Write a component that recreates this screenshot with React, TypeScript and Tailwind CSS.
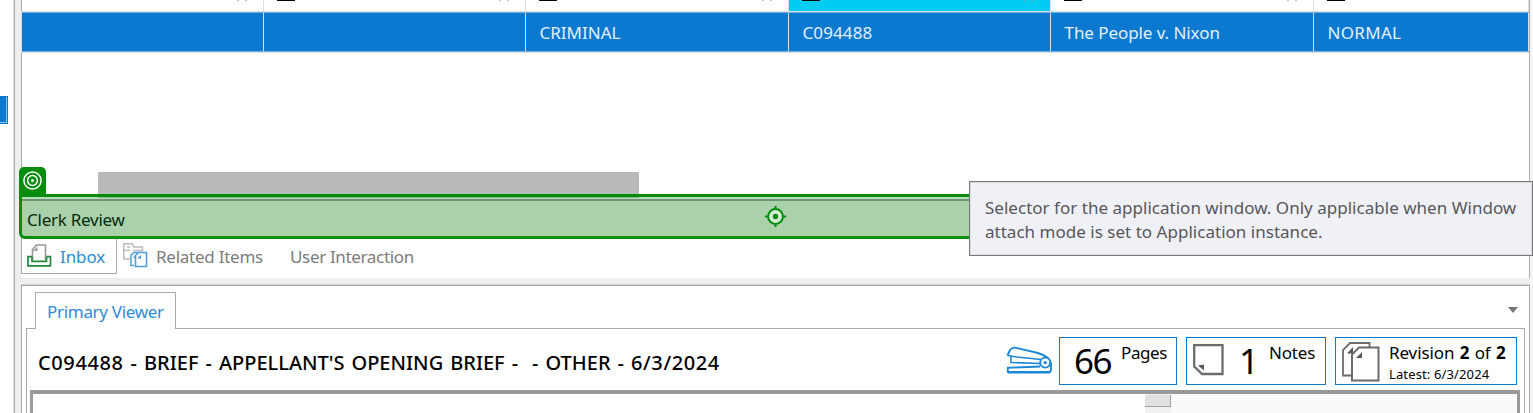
import React from "react";

const headers = [
  { w: "w-[242px]", mark: false, active: false, text: "", track: "" },
  { w: "w-[262px]", mark: true, active: false, text: "", track: "" },
  { w: "w-[263px]", mark: true, active: false, text: "CRIMINAL", track: "" },
  { w: "w-[262px]", mark: true, active: true, text: "C094488", track: "tracking-[0.1px]" },
  { w: "w-[263px]", mark: true, active: false, text: "The People v. Nixon", track: "tracking-[-0.07px]" },
  { w: "w-[215px]", mark: true, active: false, text: "NORMAL", track: "tracking-[0.3px]" },
];

function InboxIcon() {
  return (
    <svg width="25" height="25" viewBox="0 0 25 25" fill="none" className="shrink-0">
      <path d="M5.5 17V6.5L9.5 2H18.5V17" fill="#fff" stroke="#999999" strokeWidth="1.6" />
      <path d="M6 8L10.5 3.5V8Z" fill="#a0a0a0" />
      <path d="M5 13.7H1V22.8H23.5V13.7H19.5M5 13.7V18.3H19.5V13.7" stroke="#1f8a3a" strokeWidth="1.7" />
    </svg>
  );
}

function RelatedIcon() {
  return (
    <svg width="25" height="25" viewBox="0 0 25 25" fill="none" className="shrink-0">
      <path d="M7 16H.8V.8H9L11 4H19.5V8.5M.8 7.5H7M10 7.5H19.5M4 4H7" stroke="#bcbcbc" strokeWidth="1.5" />
      <path d="M11 22.5H8V12L11 9.5H15" stroke="#4b9fdc" strokeWidth="1.5" />
      <path d="M12.5 23.5V12.5L15.5 9.5H23.5V23.5Z" fill="#fff" stroke="#4b9fdc" strokeWidth="1.6" />
      <path d="M14.5 15.5L18 12V15.5Z" fill="#3491d8" />
      <path d="M10 15L12 12.5V15Z" fill="#3491d8" />
    </svg>
  );
}

function StaplerIcon() {
  return (
    <svg width="48" height="30" viewBox="0 0 48 30" fill="none" stroke="#1c87d4" strokeWidth="1.9" strokeLinejoin="round" className="shrink-0">
      <path d="M1.5 9.5L4 4Q6 1 10 1.8L30 6.5Q44 10 45 18V23.5Q45 26 43 26H1.8V21.8L34 20.5" />
      <path d="M1.5 9.5L11 11L35 13.5M5 10.5V16.5L34 17.5" strokeWidth="1.6" />
      <path d="M2 26.2H44" strokeWidth="2.6" />
      <circle cx="39.2" cy="16.6" r="5" fill="#fff" />
      <circle cx="39.2" cy="16.6" r="1.7" fill="#1c87d4" stroke="none" />
    </svg>
  );
}

function NoteIcon() {
  return (
    <svg width="31" height="32" viewBox="0 0 31 32" fill="none" className="shrink-0">
      <path d="M1.2 1.2H29.5V30H9L1.2 22.5Z" stroke="#6b6c6e" strokeWidth="2.3" />
      <path d="M5 21.5L11 20.5V26.5Z" fill="#58595b" />
    </svg>
  );
}

function RevisionIcon() {
  return (
    <svg width="38" height="40" viewBox="0 0 38 40" fill="none" stroke="#6b6c6e" strokeWidth="1.8" className="shrink-0">
      <path d="M9 33.5H1V8L8 1H27.5V5" />
      <path d="M5 11.5L11 5V11.5Z" fill="#58595b" stroke="none" />
      <path d="M10 38.5V12.5L17 5.5H36.5V38.5Z" fill="#fff" strokeWidth="2" />
      <path d="M14 16L20 10V16Z" fill="#58595b" stroke="none" />
    </svg>
  );
}

export default function App() {
  return (
    <div className="relative flex h-[413px] w-[1533px] overflow-hidden bg-white font-['Noto_Sans',sans-serif] text-[17px] leading-6">
      <aside className="w-[13px] shrink-0 pt-24">
        <div className="h-7 w-2 bg-[#0c79d1] pt-px pr-px pb-px">
          <div className="h-full border-r border-b border-[#8dbfe9]" />
        </div>
      </aside>
      <div className="w-2 shrink-0 border-l border-[#e3e3e3]">
        <div className="h-full border-l border-[#a9a9a9] bg-[#eeeeee]" />
      </div>

      <main className="flex w-[1509px] shrink-0 flex-col">
        <section className="flex h-[278px] shrink-0 flex-col border-r border-[#b0b0b0] bg-white">
          <div className="flex h-[11px] shrink-0 border-l border-[#a9a9a9]">
            {headers.map((h, i) => (
              <div
                key={i}
                className={`${h.w} flex shrink-0 items-start justify-between border-r border-[#dedede] pr-4 pl-[13px] ${h.active ? "bg-[#00cdf1]" : ""}`}
              >
                <span className={`h-px w-[18px] ${h.mark ? "bg-black" : ""}`} />
                {i < 5 && (
                  <span className="flex gap-[6px]">
                    <i className="h-px w-[2px] bg-[#999999]/60" />
                    <i className="h-px w-[2px] bg-[#999999]/60" />
                  </span>
                )}
              </div>
            ))}
          </div>
          <div className="h-[42px] shrink-0 border-y border-l border-[#dddddd]">
            <div className="flex h-10 border-y border-[#78b2e3] bg-[#0c79d1] text-[#e4f0fb]">
              {headers.map((h, i) => (
                <div key={i} className={`${h.w} flex shrink-0 items-center border-r border-[#d5e2ee] pt-px pl-[13.5px] whitespace-nowrap ${h.track}`}>
                  {h.text}
                </div>
              ))}
            </div>
          </div>
          <div className="h-[185px] shrink-0 border-l border-[#a9a9a9] pt-[119px] pl-[76px]">
            <div className="h-[27px] w-[541px] bg-[#b9babc]" />
          </div>
          <nav className="flex h-9 shrink-0 text-[#7c7c7c]">
            <div className="flex w-24 items-start border-r border-b border-l border-[#a9a9a9] bg-white pt-[5px] pl-[5px]">
              <InboxIcon />
              <span className="pt-[2px] pl-2 tracking-[-0.1px] text-[#2f8bd4]">Inbox</span>
            </div>
            <div className="flex w-[146px] items-start pt-[5px] pl-[6px]">
              <RelatedIcon />
              <span className="pt-[2px] pl-2 tracking-[-0.25px] whitespace-nowrap">Related Items</span>
            </div>
            <span className="pt-[7px] pl-[27px] tracking-[-0.34px] whitespace-nowrap">User Interaction</span>
          </nav>
        </section>

        <div className="h-[7px] shrink-0 border-b border-[#cecece] bg-[#eeeeee]" />

        <section className="flex flex-1 flex-col border border-b-0 border-[#a9a9a9]">
          <div className="flex h-[43px] shrink-0 items-end justify-between px-1">
            <div className="h-full w-[9px] border-b border-[#a9a9a9]" />
            <div className="flex h-full w-[141px] flex-col justify-end">
              <div className="h-[37px] border border-b-0 border-[#a9a9a9] pt-[7px] pl-[11px] tracking-[-0.3px] whitespace-nowrap text-[#2f8bd4]">Primary Viewer</div>
            </div>
            <div className="flex h-full flex-1 justify-end border-b border-[#a9a9a9] pt-[21px] pr-[7px]">
              <svg width="10" height="6" viewBox="0 0 10 6"><path d="M0 0H10L5 6Z" fill="#747474" /></svg>
            </div>
          </div>
          <div className="mx-1 flex-1 border-x border-[#a9a9a9] pr-1 pl-[3px]">
            <div className="flex h-[61px] items-start pt-2 pl-2 text-black">
              <h1 className="flex-1 pt-[14px] text-[20px] font-[550] [word-spacing:1.8px] whitespace-pre">
                <span className="tracking-[0.6px]">C094488</span>
                {" - BRIEF - APPELLANT'S OPENING BRIEF -  - OTHER - "}
                <span className="tracking-[0.6px]">6/3/2024</span>
              </h1>
              <div className="flex shrink-0 items-start pr-[3px]">
                <div className="pt-[9px] pr-[5px]"><StaplerIcon /></div>
                <div className="flex h-12 w-[118px] border border-[#0c79d1] pl-[14px]">
                  <span className="w-[38px] text-[35px] leading-[46px] tracking-[-1.5px]">66</span>
                  <span className="pt-[3px] pl-[9px] tracking-[-0.4px]">Pages</span>
                </div>
                <div className="ml-[9px] flex h-12 w-[140px] border border-[#0c79d1] pl-[6px]">
                  <div className="pt-[6px]"><NoteIcon /></div>
                  <span className="w-[45px] pl-[15px] text-[35px] leading-[46px]">1</span>
                  <span className="pt-[3px] tracking-[-0.2px]">Notes</span>
                </div>
                <div className="ml-[9px] flex h-12 w-[182px] border border-[#0c79d1] pl-[6px]">
                  <div className="pt-1"><RevisionIcon /></div>
                  <div className="pl-[9px] whitespace-nowrap">
                    <div className="pt-[3px] tracking-[-0.1px] [word-spacing:1px]">Revision <b>2</b> of <b>2</b></div>
                    <div className="text-[13px] leading-[18px] tracking-[0.13px]">Latest: 6/3/2024</div>
                  </div>
                </div>
              </div>
            </div>
            <div className="flex h-[23px] border-x-[3px] border-t-[4px] border-[#999999]">
              <div className="flex-1 bg-white" />
              <div className="w-[26px] bg-[#f0f0f0] pt-px">
                <div className="h-3 border-r border-b border-[#a0a0a0] bg-[#e1e1e1]" />
              </div>
              <div className="w-[346px] bg-[#fafafa]" />
            </div>
          </div>
        </section>
      </main>
      <div className="flex-1 bg-[#f5f5f5]" />

      <div className="absolute top-[167px] left-[19px] h-[30px] w-[27px] rounded-t-[5px] bg-[#058d0d] pt-1 pl-1">
        <svg width="20" height="20" viewBox="0 0 20 20" fill="none" stroke="#fff" strokeWidth="1.5">
          <circle cx="9.5" cy="9.5" r="8.6" /><circle cx="9.5" cy="9.5" r="4.9" /><circle cx="9.5" cy="9.5" r="1.5" fill="#fff" stroke="none" />
        </svg>
      </div>
      <div className="absolute top-[194px] left-[19px] h-[45px] w-[1514px] rounded-bl-[6px] border-[3px] border-[#058d0d] bg-[#abd1ab]">
        <div className="h-[2px] bg-[#b7dcb7]"><div className="ml-[76px] h-px w-[541px] bg-[#8bb18f]" /></div>
        <div className="h-[2px] bg-[#6a956f]" />
        <div className="flex items-start">
          <span className="w-[743px] pt-[7px] pl-[5px] tracking-[-0.25px] text-[#062b0b]">Clerk Review</span>
          <svg width="21" height="21" viewBox="0 0 21 21" fill="none" className="mt-[5px]">
            <circle cx="10.5" cy="10.5" r="7.4" fill="#d5ead5" stroke="#058d0d" strokeWidth="2" />
            <circle cx="10.5" cy="10.5" r="2.7" fill="#058d0d" />
            <path d="M10.5 0V4M10.5 17V21M0 10.5H4M17 10.5H21" stroke="#058d0d" strokeWidth="2" />
          </svg>
        </div>
      </div>
      <div className="absolute top-[181px] left-[969px] h-[75px] w-[564px] border border-[#77787c] bg-[#f0f1f7] pt-[14px] pl-[15px] tracking-[0.02px] whitespace-nowrap text-[#57575a] shadow-[inset_0_0_0_1px_#dcdde1]">
        <div>Selector for the application window. Only applicable when Window</div>
        <div>attach mode is set to Application instance.</div>
      </div>
    </div>
  );
}
